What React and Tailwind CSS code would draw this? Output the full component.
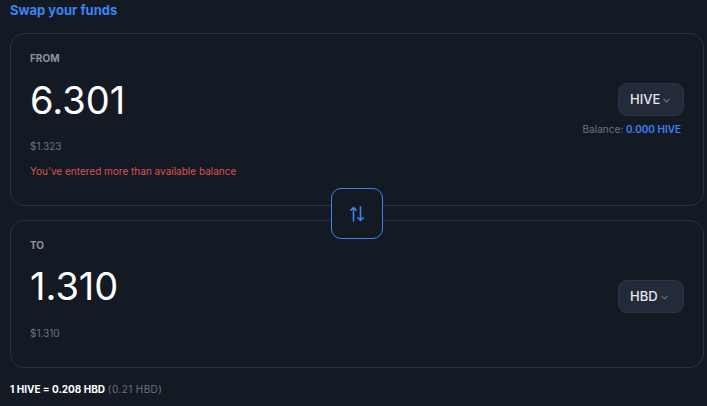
import React, { useState } from "react";

const ChevronDown = () => (
  <svg width="9" height="9" viewBox="0 0 10 10" fill="none" className="ml-[2px] mt-[1px]">
    <path d="M2 3.5l3 3 3-3" stroke="#6b7280" strokeWidth="1.2" strokeLinecap="round" strokeLinejoin="round" />
  </svg>
);

const SwapIcon = () => (
  <svg width="16" height="16" viewBox="0 0 16 16" fill="none">
    <path d="M4.5 15V1.5M1.8 4.2L4.5 1.5l2.7 2.7" stroke="#3b82f6" strokeWidth="1.6" strokeLinecap="round" strokeLinejoin="round" />
    <path d="M11.5 1V14.5M8.8 11.8l2.7 2.7 2.7-2.7" stroke="#3b82f6" strokeWidth="1.6" strokeLinecap="round" strokeLinejoin="round" />
  </svg>
);

const TokenButton = ({ label }) => (
  <button className="flex items-center w-[66px] h-[33px] pl-[11px] rounded-[9px] bg-[#222b3a] border border-[#2b3546] text-[13px] font-medium text-[#e5e7eb]">
    {label}
    <ChevronDown />
  </button>
);

export default function App() {
  const [fromAmount] = useState("6.301");
  const [toAmount] = useState("1.310");

  return (
    <div
      className="min-h-screen bg-[#141a23] pl-[10px] pr-[3px] pt-[2px]"
      style={{ fontFamily: "Inter, 'Noto Sans', sans-serif" }}
    >
      <h1 className="text-[13px] leading-[16px] font-bold text-[#3b82f6]">Swap your funds</h1>

      <div className="relative mt-[15px]">
        {/* From card */}
        <div className="h-[173px] rounded-[14px] border border-[#2a3140] pt-[18px] px-[19px]">
          <div className="text-[10px] leading-[12px] font-bold text-[#8b93a1] uppercase">From</div>
          <div className="flex justify-between items-start mt-[17px]">
            <div>
              <div className="text-[38px] leading-[38px] text-white">{fromAmount}</div>
              <div className="mt-[21px] text-[10px] leading-[12px] text-[#6b7280]">$1.323</div>
              <div className="mt-[13px] text-[10px] leading-[13px] text-[#d9534f]">
                You've entered more than available balance
              </div>
            </div>
            <div className="flex flex-col items-end mt-[2px]">
              <TokenButton label="HIVE" />
              <div className="mt-[7px] pr-[3px] text-[10px] leading-[12px] text-[#6b7280]">
                Balance: <span className="font-semibold text-[#3b82f6]">0.000 HIVE</span>
              </div>
            </div>
          </div>
        </div>

        {/* Swap button */}
        <button className="absolute left-1/2 -translate-x-1/2 top-[155px] w-[52px] h-[51px] flex items-center justify-center rounded-[10px] border border-[#3b82f6] bg-[#141a23]">
          <SwapIcon />
        </button>

        {/* To card */}
        <div className="mt-[14px] h-[148px] rounded-[14px] border border-[#2a3140] pt-[18px] px-[19px]">
          <div className="text-[10px] leading-[12px] font-bold text-[#8b93a1] uppercase">To</div>
          <div className="flex justify-between items-start mt-[16px]">
            <div>
              <div className="text-[38px] leading-[38px] text-white">{toAmount}</div>
              <div className="mt-[22px] text-[10px] leading-[12px] text-[#6b7280]">$1.310</div>
            </div>
            <div className="mt-[13px]">
              <TokenButton label="HBD" />
            </div>
          </div>
        </div>
      </div>

      <div className="mt-[15px] text-[10px] leading-[12px]">
        <span className="font-bold text-white">1 HIVE = 0.208 HBD</span>{" "}
        <span className="text-[#6b7280] tracking-[0.4px]">(0.21 HBD)</span>
      </div>
    </div>
  );
}
